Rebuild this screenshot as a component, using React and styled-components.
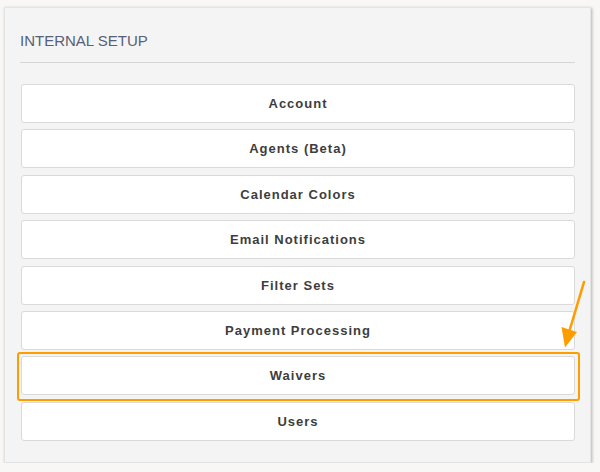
import React from "react";
import styled, { createGlobalStyle } from "styled-components";

const GlobalStyle = createGlobalStyle`
  body {
    margin: 0;
    background: #f8f7f5;
    font-family: "Liberation Sans", Arial, sans-serif;
  }
`;

const Panel = styled.div`
  position: relative;
  box-sizing: border-box;
  width: 587px;
  height: 456px;
  margin: 7px 0 0 4px;
  padding: 23px 15px 22px 15px;
  background: #f4f4f4;
  border: 1px solid #e4e4e4;
  box-shadow: 1px 1px 3px rgba(0, 0, 0, 0.28);
`;

const Title = styled.h2`
  margin: 0;
  padding-bottom: 11px;
  border-bottom: 1px solid #d6d6d6;
  font-size: 15px;
  line-height: 20px;
  font-weight: 400;
  color: #576077;
`;

const ButtonList = styled.div`
  display: flex;
  flex-direction: column;
  gap: 6.4px;
  margin: 21px 0 0 1px;
`;

const SetupButton = styled.button`
  position: relative;
  box-sizing: border-box;
  height: 39px;
  width: 100%;
  background: #ffffff;
  border: 1px solid #dadada;
  border-radius: 3px;
  font-family: "Liberation Sans", Arial, sans-serif;
  font-size: 13px;
  font-weight: 700;
  letter-spacing: 1px;
  color: #3d3d3d;
  cursor: pointer;

  &::after {
    content: "";
    display: ${(p) => (p.$highlight ? "block" : "none")};
    position: absolute;
    left: -5px;
    top: -5px;
    right: -6px;
    bottom: -7px;
    border: 2.5px solid #ff9d00;
    border-radius: 3px;
  }
`;

const Arrow = styled.svg`
  position: absolute;
  left: -1px;
  top: -1px;
  width: 587px;
  height: 456px;
  pointer-events: none;
`;

const items = [
  "Account",
  "Agents (Beta)",
  "Calendar Colors",
  "Email Notifications",
  "Filter Sets",
  "Payment Processing",
  "Waivers",
  "Users",
];

export default function App() {
  return (
    <>
      <GlobalStyle />
      <Panel>
        <Title>INTERNAL SETUP</Title>
        <ButtonList>
          {items.map((label) => (
            <SetupButton key={label} $highlight={label === "Waivers"}>
              {label}
            </SetupButton>
          ))}
        </ButtonList>
        <Arrow viewBox="4 7 587 456">
          <line x1="584" y1="282" x2="568.5" y2="334" stroke="#ff9d00" strokeWidth="2.6" strokeLinecap="round" />
          <polygon points="561.5,327 577,332 565,347.5" fill="#ff9d00" />
        </Arrow>
      </Panel>
    </>
  );
}
